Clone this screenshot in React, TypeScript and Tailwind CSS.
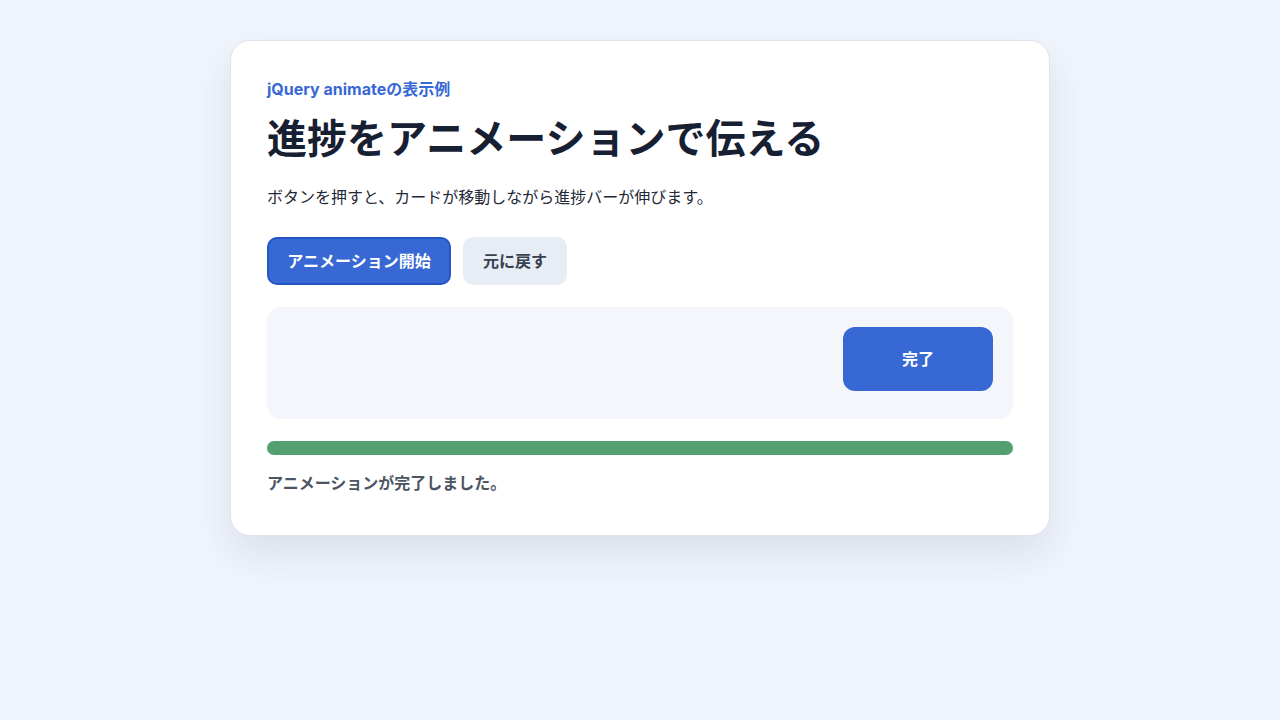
import React from "react";

const font = { fontFamily: 'Inter, "Noto Sans CJK JP", sans-serif' };

export default function App() {
  return (
    <div className="min-h-screen w-full bg-[#f0f4fc] pt-10" style={font}>
      <div className="mx-auto w-[820px] rounded-[20px] border border-[#dfe3ea] bg-white px-9 pt-9 pb-10 shadow-[0_18px_40px_rgba(30,50,90,0.10)]">
        {/* Header */}
        <p className="text-base leading-6 font-bold text-[#3868d4]">jQuery animateの表示例</p>
        <h1 className="mt-[14px] text-[40px] leading-[48px] font-bold text-[#172033]">進捗をアニメーションで伝える</h1>
        <p className="mt-[22px] text-base leading-6 text-[#1f2937]">
          ボタンを押すと、カードが移動しながら進捗バーが伸びます。
        </p>

        {/* Actions */}
        <div className="mt-7 flex gap-3">
          <button className="h-12 w-[184px] rounded-[10px] border-2 border-[#2457c5] bg-[#3868d4] text-base font-bold text-white">
            アニメーション開始
          </button>
          <button className="h-12 w-[104px] rounded-[10px] bg-[#e7ecf5] text-base font-bold text-[#374151]">
            元に戻す
          </button>
        </div>

        {/* Stage */}
        <div className="mt-[22px] flex h-[112px] justify-end rounded-[14px] bg-[#f4f6fb] p-5">
          <div className="flex h-16 w-[150px] items-center justify-center rounded-[12px] bg-[#3868d4] text-base font-bold text-white">
            完了
          </div>
        </div>

        {/* Progress */}
        <div className="mt-[22px] h-[14px] w-full rounded-full bg-[#e5e7eb]">
          <div className="h-full w-full rounded-full bg-[#53a071]" />
        </div>
        <p className="mt-4 text-base leading-6 font-bold text-[#4b5563]">アニメーションが完了しました。</p>
      </div>
    </div>
  );
}
